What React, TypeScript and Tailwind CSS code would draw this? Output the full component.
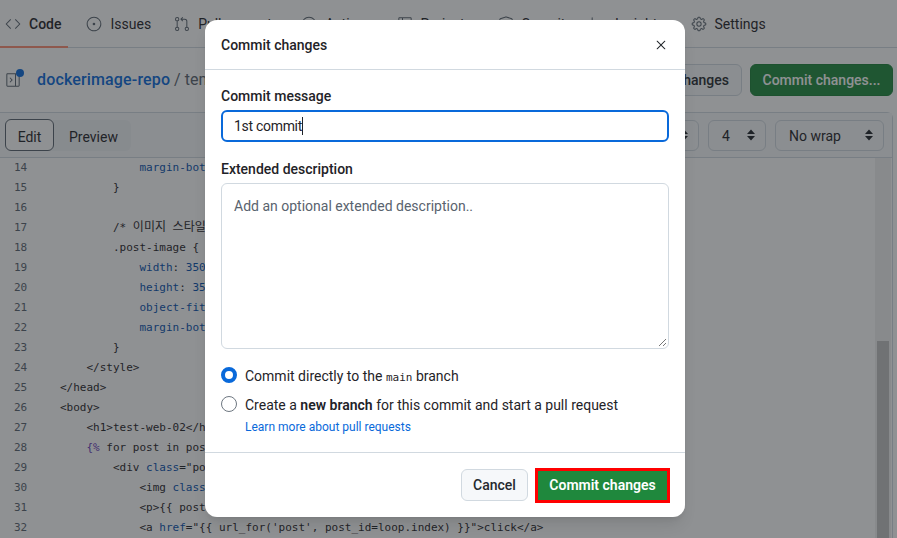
import {
  GoCode,
  GoGear,
  GoGitPullRequest,
  GoGraph,
  GoIssueOpened,
  GoPlay,
  GoShieldCheck,
  GoSidebarCollapse,
  GoTable,
  GoX,
} from "react-icons/go";

const uiFont = "font-['Roboto','Noto_Sans',sans-serif]";

const tabs = [
  { label: "Code", icon: GoCode, gap: "mr-[25px]", active: true },
  { label: "Issues", icon: GoIssueOpened, gap: "mr-[23px]" },
  { label: "Pull requests", icon: GoGitPullRequest, gap: "mr-[22px]" },
  { label: "Actions", icon: GoPlay, gap: "mr-[24px]" },
  { label: "Projects", icon: GoTable, gap: "mr-[26px]" },
  { label: "Security", icon: GoShieldCheck, gap: "mr-[19px]" },
  { label: "Insights", icon: GoGraph, gap: "mr-[26px]" },
  { label: "Settings", icon: GoGear, gap: "mr-0" },
];

const P = "text-[#0550ae]";
const T = "text-[#1f2328]";
const V = "text-[#6639ba]";
const K = "text-[#1f2328] text-[12px] leading-none";

// each line: [number, [class, text] pairs]
const lines: [number, [string, string][]][] = [
  [14, [[P, "            margin-bottom"], [T, ": 20px;"]]],
  [15, [[T, "        }"]]],
  [16, []],
  [17, [[T, "        /* "], [K, "이미지"], [T, " "], [K, "스타일"], [T, " */"]]],
  [18, [[T, "        .post-image {"]]],
  [19, [[P, "            width"], [T, ": "], [P, "350px"], [T, ";"]]],
  [20, [[P, "            height"], [T, ": "], [P, "350px"], [T, ";"]]],
  [21, [[P, "            object-fit"], [T, ": cover;"]]],
  [22, [[P, "            margin-bottom"], [T, ": 20px;"]]],
  [23, [[T, "        }"]]],
  [24, [[T, "    </style>"]]],
  [25, [[T, "</head>"]]],
  [26, [[T, "<body>"]]],
  [27, [[T, "    <h1>test-web-02</h1>"]]],
  [28, [[V, "    {%"], [T, " for post in posts %}"]]],
  [29, [[T, "        <div "], [P, "class"], [T, '="post">']]],
  [30, [[T, "            <img "], [P, "class"], [T, '="post-image">']]],
  [31, [[T, "            <p>{{ post.title }}</p>"]]],
  [32, [[T, "            <a "], [P, "href"], [T, "=\"{{ url_for('post', post_id=loop.index) }}\">click</a>"]]],
];

function Unfold() {
  return (
    <svg width="8" height="14" viewBox="0 0 8 14" className="shrink-0 fill-[#1f2328]">
      <path d="M4 1.5 8 6H0zM0 8h8l-4 4.5z" />
    </svg>
  );
}

function SelectBox({ label, width }: { label: string; width: string }) {
  return (
    <div className={`flex h-[31px] items-center justify-between rounded-md border border-[#d1d9e0] bg-[#f6f8fa] pl-[13px] pr-[10px] text-sm text-[#1f2328] ${width}`}>
      <span className="pt-px">{label}</span>
      <Unfold />
    </div>
  );
}

function Radio({ checked }: { checked?: boolean }) {
  return (
    <span
      className={`h-4 w-4 shrink-0 rounded-full bg-white ${
        checked ? "border-[4px] border-[#0969da]" : "border border-[#6e7781]"
      }`}
    />
  );
}

export default function App() {
  return (
    <div className={`relative h-[538px] w-[897px] overflow-hidden bg-white ${uiFont}`}>
      {/* tab bar */}
      <nav className="flex h-[48px] items-center border-b border-[#d1d9e0] pl-[5px] text-sm text-[#1f2328]">
        {tabs.map((tab) => (
          <div
            key={tab.label}
            className={`relative flex h-full items-center gap-2 ${tab.gap} ${tab.active ? "font-medium" : ""}`}
          >
            <tab.icon className="h-4 w-4 text-[#59636e]" />
            <span>{tab.label}</span>
            {tab.active && <span className="absolute -left-[5px] -right-[7px] bottom-[-1px] h-[2px] bg-[#fd8c73]" />}
          </div>
        ))}
      </nav>

      {/* breadcrumb row */}
      <div className="flex h-[64px] items-center justify-between pl-[5px] pr-[4px]">
        <div className="flex items-center gap-4">
          <div className="relative">
            <GoSidebarCollapse className="h-4 w-4 text-[#59636e]" />
            <span className="absolute -right-[3px] -top-[3px] h-2 w-2 rounded-full bg-[#0969da]" />
          </div>
          <div className="text-base">
            <span className="font-medium tracking-[0.15px] text-[#0969da]">dockerimage-repo</span>
            <span className="text-[#59636e]"> / templates</span>
          </div>
        </div>
        <div className="flex items-center gap-2 text-sm font-medium">
          <div className="flex h-8 items-center rounded-md border border-[#d1d9e0] bg-[#f6f8fa] px-3 text-[#25292e]">
            Cancel changes
          </div>
          <div className="flex h-8 w-[143px] items-center justify-center rounded-md border border-[#1a7f37] bg-[#1f883d] text-white">
            Commit changes...
          </div>
        </div>
      </div>

      {/* editor */}
      <div className="mr-[4px] rounded-tr-md border-r border-t border-[#d1d9e0]">
        <div className="flex h-[45px] items-center justify-between border-b border-[#d1d9e0] bg-[#f6f8fa] pl-[5px] pr-[8px]">
          <div className="flex h-[31px] items-center rounded-md bg-[#eff2f5] pt-[3px] text-sm text-[#1f2328]">
            <div className="-mt-[3px] flex h-8 w-[49px] items-center justify-center rounded-md border border-[#59636e] bg-white pt-[3px]">Edit</div>
            <div className="flex w-[77px] items-center justify-center pl-[2px]">Preview</div>
          </div>
          <div className="flex items-center gap-[9px]">
            <SelectBox label="Spaces" width="w-[100px]" />
            <SelectBox label="4" width="w-[58px]" />
            <SelectBox label="No wrap" width="w-[109px]" />
          </div>
        </div>
        <div className="flex h-[380px] overflow-hidden">
          <div className="min-w-0 flex-1 font-['DejaVu_Sans_Mono','Noto_Sans_CJK_KR',monospace] text-[11px] leading-[20px]">
            {lines.map(([num, tokens]) => (
              <div key={num} className="flex h-5 whitespace-pre">
                <span className="w-[60px] shrink-0 pl-[14px] text-[#59636e]">{num}</span>
                <span>
                  {tokens.map(([color, text], i) => (
                    <span key={i} className={color}>
                      {text}
                    </span>
                  ))}
                </span>
              </div>
            ))}
          </div>
          {/* scrollbar */}
          <div className="mr-px flex w-[16px] shrink-0 flex-col items-center bg-[#f1f1f1] px-[2px]">
            <svg width="8" height="4" viewBox="0 0 8 4" className="mt-[9px] fill-[#505050]">
              <path d="M4 0 8 4H0z" />
            </svg>
            <div className="mt-[174px] h-[300px] w-full shrink-0 bg-[#c1c1c1]" />
          </div>
        </div>
      </div>

      {/* dim backdrop */}
      <div className="absolute inset-0 bg-[rgba(31,35,40,0.5)]" />

      {/* dialog */}
      <div className="absolute left-[205px] top-[20px] flex h-[497px] w-[480px] flex-col rounded-xl bg-white text-[#1f2328] shadow-lg">
        <div className="flex h-[50px] shrink-0 items-center justify-between border-b border-[#d1d9e0] pl-4 pr-[16px] text-sm font-medium">
          <span>Commit changes</span>
          <GoX className="h-4 w-4" />
        </div>

        <div className="flex flex-1 flex-col px-4 pt-4">
          <label className="block text-sm font-medium leading-5">Commit message</label>
          <div className="mt-1 flex h-8 items-center rounded-md border-2 border-[#0969da] px-[11px] text-sm">
            <span className="tracking-[-0.3px]">1st commit</span>
            <span className="h-[18px] w-px bg-[#1f2328]" />
          </div>

          <label className="mt-[17px] block text-sm font-medium leading-5">Extended description</label>
          <div className="relative mt-1 h-[166px] rounded-md border border-[#d1d9e0] px-3 py-[12px] text-sm leading-5 text-[#59636e]">
            Add an optional extended description..
            <svg width="8" height="8" viewBox="0 0 8 8" className="absolute bottom-[2px] right-[2px] stroke-[#767676]">
              <path d="M1 8 8 1M5 8l3-3" />
            </svg>
          </div>

          <div className="mt-[16px] flex h-5 items-center gap-2 text-sm">
            <Radio checked />
            <span className="pt-px">
              Commit directly to the <span className="font-['DejaVu_Sans_Mono',monospace] text-[11px]">main</span> branch
            </span>
          </div>
          <div className="mt-[9px] flex h-5 items-center gap-2 text-sm">
            <Radio />
            <span className="pt-px">
              Create a <span className="font-semibold">new branch</span> for this commit and start a pull request
            </span>
          </div>
          <div className="mt-[5px] pl-6 text-xs leading-4 text-[#0969da]">Learn more about pull requests</div>
        </div>

        <div className="flex h-[65px] shrink-0 items-center justify-end gap-[7px] border-t border-[#d1d9e0] pr-[15px]">
          <div className="flex h-8 w-[67px] items-center justify-center rounded-md border border-[#d1d9e0] bg-[#f6f8fa] text-sm font-medium text-[#25292e]">
            Cancel
          </div>
          <div className="flex h-[35px] w-[135px] items-center justify-center border-[3px] border-[#ff0000] bg-[#1f883d] text-sm font-semibold text-white">
            Commit changes
          </div>
        </div>
      </div>
    </div>
  );
}
